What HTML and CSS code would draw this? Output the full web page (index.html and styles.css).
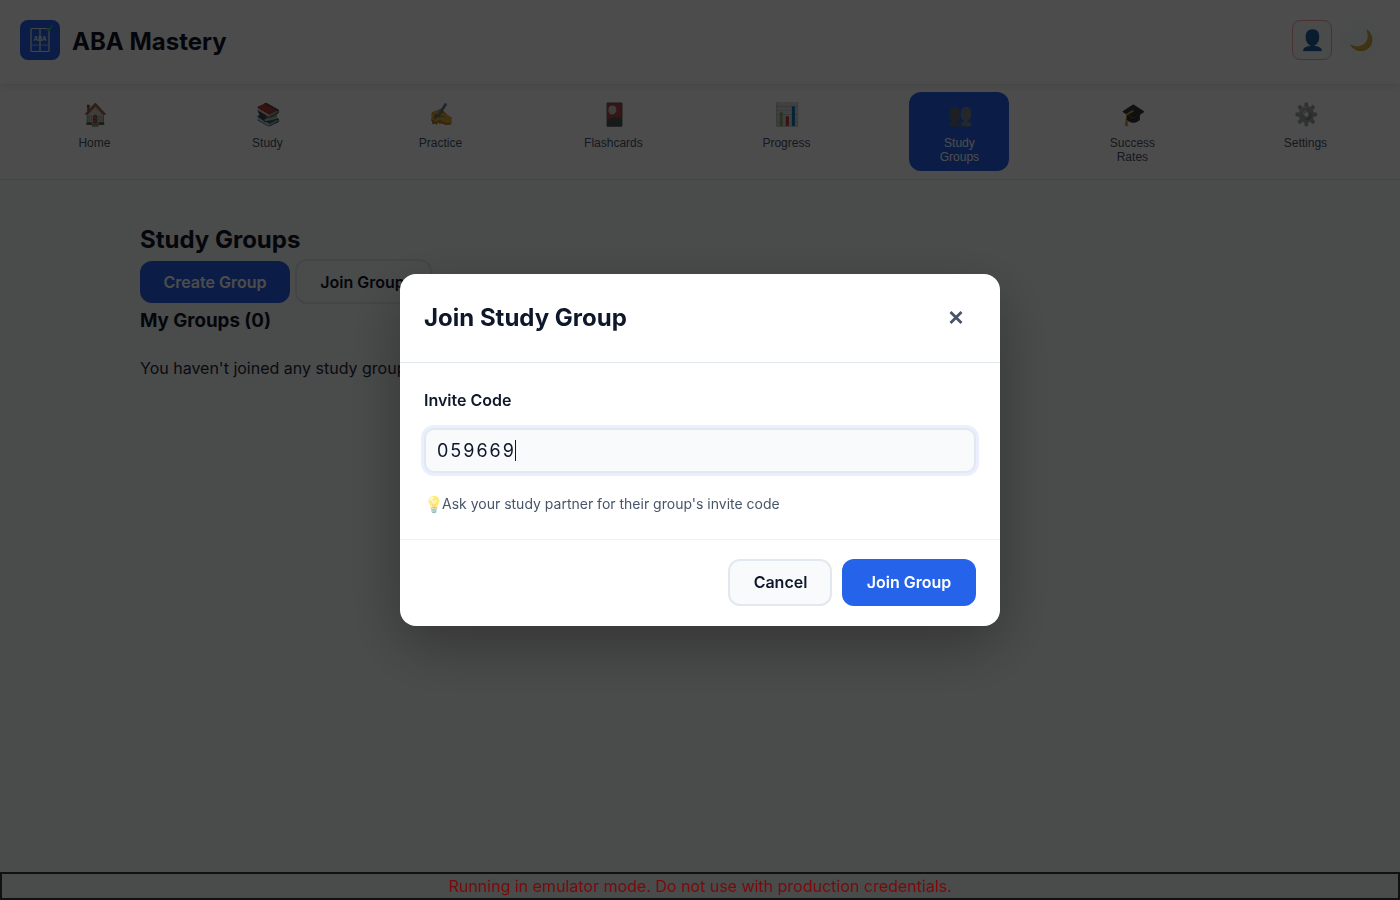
FILE: index.html
```html
<!DOCTYPE html>
<html>
<head>
    <meta charset="UTF-8">
    <title>ABA Mastery - Study Groups</title>
    <link rel="stylesheet" href="styles.css">
</head>
<body>
    <div class="header">
        <div class="header-left">
            <svg class="logo" width="40" height="40" viewBox="0 0 40 40">
                <rect width="40" height="40" rx="8" fill="#2563eb"/>
                <rect x="11" y="8.5" width="18" height="23" rx="1" fill="none" stroke="#e2e8f0" stroke-width="1.2"/>
                <line x1="20" y1="8.5" x2="20" y2="31.5" stroke="#e2e8f0" stroke-width="1.2"/>
                <line x1="11" y1="25" x2="29" y2="25" stroke="#e2e8f0" stroke-width="0.6"/>
                <text x="20" y="21" text-anchor="middle" class="logo-text">ABA</text>
                <path d="M26.5 8.5l2 2 4-5" fill="none" stroke="#22c55e" stroke-width="1.8"/>
            </svg>
            <h1>ABA Mastery</h1>
        </div>
        <div class="header-right">
            <button class="profile-btn"><span class="emoji">👤</span></button>
            <button class="theme-btn"><span class="emoji">🌙</span></button>
        </div>
    </div>

    <div class="nav">
        <div class="nav-item"><span class="nav-icon emoji">🏠</span><span>Home</span></div>
        <div class="nav-item"><span class="nav-icon emoji">📚</span><span>Study</span></div>
        <div class="nav-item"><span class="nav-icon emoji">✍️</span><span>Practice</span></div>
        <div class="nav-item"><span class="nav-icon emoji">🎴</span><span>Flashcards</span></div>
        <div class="nav-item"><span class="nav-icon emoji">📊</span><span>Progress</span></div>
        <div class="nav-item active"><span class="nav-icon emoji">👥</span><span>Study Groups</span></div>
        <div class="nav-item"><span class="nav-icon emoji">🎓</span><span>Success Rates</span></div>
        <div class="nav-item"><span class="nav-icon emoji gear-icon">⚙️</span><span>Settings</span></div>
    </div>

    <div class="main">
        <h2>Study Groups</h2>
        <div class="group-actions">
            <button class="btn btn-primary">Create Group</button>
            <button class="btn btn-outline">Join Group</button>
        </div>
        <h3>My Groups (0)</h3>
        <p class="empty-text">You haven't joined any study groups yet.</p>
    </div>

    <div class="overlay">
        <div class="modal">
            <div class="modal-header">
                <div class="modal-title">Join Study Group</div>
                <button class="modal-close">
                    <svg width="16" height="16" viewBox="0 0 16 16">
                        <path d="M2.5 3l11 11M13.5 3l-11 11" stroke="#475569" stroke-width="2.8" fill="none"/>
                    </svg>
                </button>
            </div>
            <div class="modal-body">
                <label class="field-label" for="invite-code">Invite Code</label>
                <div class="input-wrap">
                    <input class="field-input" id="invite-code" type="text" value="059669">
                    <span class="input-caret"></span>
                </div>
                <div class="field-hint"><span class="hint-icon">💡</span>Ask your study partner for their group's invite code</div>
            </div>
            <div class="modal-footer">
                <button class="modal-btn cancel-btn">Cancel</button>
                <button class="modal-btn join-btn">Join Group</button>
            </div>
        </div>
    </div>

    <p class="emulator-warning">Running in emulator mode. Do not use with production credentials.</p>
</body>
</html>
```

FILE: styles.css
```css
* {
    box-sizing: border-box;
}

body {
    font-family: Inter, sans-serif;
    margin: 0;
    height: 900px;
    overflow: hidden;
    background: #f8fafc;
    color: #0f172a;
}

button {
    font-family: Inter, sans-serif;
}

.emoji {
    filter: brightness(0.85) saturate(0.8);
}

.header {
    position: relative;
    z-index: 2;
    display: flex;
    align-items: center;
    justify-content: space-between;
    height: 84px;
    padding: 0 19px 4px 20px;
    background: #fff;
    box-shadow: 0 2px 8px rgba(0, 0, 0, 0.1);
}

.header-left {
    display: flex;
    align-items: center;
    gap: 12px;
}

.logo-text {
    font-family: Inter, sans-serif;
    font-size: 6px;
    font-weight: 700;
    fill: #e2e8f0;
}

.header h1 {
    margin: 2px 0 0;
    font-size: 24px;
    font-weight: 700;
}

.header-right {
    display: flex;
    align-items: center;
    gap: 9px;
}

.profile-btn,
.theme-btn {
    display: flex;
    align-items: center;
    justify-content: center;
    width: 40px;
    height: 40px;
    padding: 0;
    font-size: 20px;
}

.profile-btn {
    border: 1px solid #fca5a5;
    border-radius: 8px;
    background: #f8fafc;
}

.theme-btn {
    border: none;
    border-radius: 50%;
    background: #f8fafc;
}

.nav {
    display: grid;
    grid-template-columns: repeat(8, 1fr);
    height: 96px;
    padding: 8px;
    background: #fff;
    border-bottom: 1px solid #e2e8f0;
    font-family: "Liberation Sans", Arial, sans-serif;
}

.nav-item {
    display: flex;
    flex-direction: column;
    align-items: center;
    justify-self: start;
    width: 100px;
    height: 79px;
    margin-left: 36.4px;
    padding: 8px 16px;
    border-radius: 12px;
    font-size: 12px;
    line-height: 14px;
    text-align: center;
    color: #475569;
}

.nav-icon {
    display: block;
    height: 30px;
    margin: 0 0 6px 2px;
    font-size: 22px;
    line-height: 30px;
    transform: scaleX(0.9);
}

.nav-item.active {
    background: #2563eb;
    color: #fff;
}

.nav-item.active .emoji,
.gear-icon {
    filter: grayscale(0.9);
}

.main {
    padding: 40px 140px 0;
}

.main h2 {
    margin: 0;
    font-size: 24px;
    line-height: 39px;
    font-weight: 700;
}

.group-actions {
    display: flex;
    align-items: center;
    gap: 5px;
}

.btn {
    font-size: 16px;
    font-weight: 600;
    border-radius: 12px;
}

.btn-primary {
    width: 150px;
    height: 42px;
    border: none;
    background: #2563eb;
    color: #fff;
}

.btn-outline {
    width: 137px;
    height: 45px;
    padding: 0 2px 0 0;
    border: 2px solid #e2e8f0;
    background: #f8fafc;
    color: #0f172a;
}

.main h3 {
    margin: 1px 0 15px;
    font-size: 18.72px;
    line-height: 32px;
    font-weight: 700;
}

.empty-text {
    margin: 0;
    font-size: 16px;
    line-height: 32px;
    color: #1e293b;
}

.overlay {
    position: fixed;
    top: 0;
    left: 0;
    right: 0;
    bottom: 0;
    z-index: 10;
    display: flex;
    align-items: center;
    justify-content: center;
    background: rgba(0, 0, 0, 0.7);
}

.modal {
    width: 600px;
    height: 352px;
    background: #fff;
    border-radius: 16px;
    box-shadow: 0 20px 60px rgba(0, 0, 0, 0.3);
}

.modal-header {
    display: flex;
    align-items: center;
    justify-content: space-between;
    height: 89px;
    padding: 0 24px 2px;
    border-bottom: 1px solid #e2e8f0;
}

.modal-title {
    font-size: 24px;
    font-weight: 700;
}

.modal-close {
    display: flex;
    align-items: center;
    justify-content: center;
    width: 40px;
    height: 40px;
    padding: 0;
    border: none;
    background: none;
}

.modal-body {
    height: 176px;
    padding: 24px;
}

.field-label {
    display: block;
    margin-bottom: 15px;
    font-size: 16px;
    line-height: 26px;
    font-weight: 600;
}

.input-wrap {
    position: relative;
}

.field-input {
    display: block;
    width: 100%;
    height: 45px;
    padding: 0 11px;
    border: 2px solid #e2e8f0;
    border-radius: 10px;
    background: #f8fafc;
    font-family: Inter, sans-serif;
    font-size: 18px;
    letter-spacing: 2px;
    color: #0f172a;
    outline: none;
    box-shadow: 0 0 0 3px rgba(37, 99, 235, 0.1);
}

.input-caret {
    position: absolute;
    left: 91px;
    top: 12px;
    width: 1px;
    height: 21px;
    background: #0f172a;
}

.field-hint {
    display: flex;
    align-items: center;
    margin-top: 20px;
    font-size: 14px;
    line-height: 22px;
    color: #475569;
}

.hint-icon {
    width: 18px;
    font-size: 16px;
    opacity: 0.5;
}

.modal-footer {
    display: flex;
    justify-content: flex-end;
    gap: 10px;
    padding: 19px 24px 20px;
    border-top: 1px solid #eef2f7;
}

.modal-btn {
    height: 47px;
    padding: 0 0 2px;
    font-size: 16px;
    font-weight: 600;
    border-radius: 12px;
}

.cancel-btn {
    width: 104px;
    padding-left: 1px;
    border: 2px solid #e2e8f0;
    background: #f8fafc;
    color: #0f172a;
}

.join-btn {
    width: 134px;
    border: none;
    background: #2563eb;
    color: #fff;
}

.emulator-warning {
    position: fixed;
    left: 0;
    bottom: 0;
    z-index: 20;
    width: 100%;
    margin: 0;
    border: 2px solid #111;
    background: transparent;
    color: #7a0a0a;
    font-size: 16px;
    line-height: 24px;
    text-align: center;
}
```
